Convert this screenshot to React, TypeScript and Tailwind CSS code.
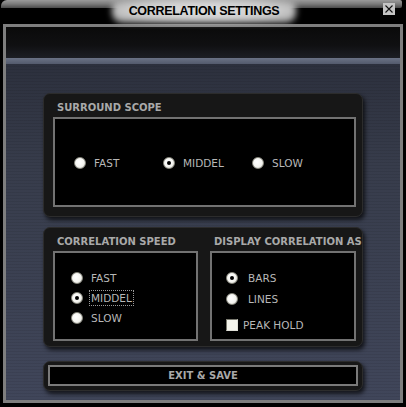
import React from 'react';

const Radio = ({ checked }: { checked?: boolean }) => (
    <span className="relative flex items-center justify-center w-[12px] h-[12px] rounded-full border border-[#8a8a80] bg-[radial-gradient(circle_at_40%_40%,#ffffff_0%,#f4f4f0_55%,#c8c8c0_100%)] shrink-0">
        {checked && <span className="w-[4px] h-[4px] rounded-full bg-black" />}
    </span>
);

const Option = ({ label, checked, focused }: { label: string; checked?: boolean; focused?: boolean }) => (
    <div className="flex items-center h-[12px] gap-[7px]">
        <Radio checked={checked} />
        <span className={`px-[1px] leading-[14px] text-[10.5px] text-[#b8b8b8] ${focused ? 'outline outline-1 outline-dotted outline-[#9a9a9a]' : ''}`}>
            {label}
        </span>
    </div>
);

// Dark leather panel with rounded corners and a drop shadow
const Panel = ({ children, className = '' }: { children: React.ReactNode; className?: string }) => (
    <div className={`rounded-[7px] bg-[#171717] border border-[#2c2c2c] shadow-[2px_3px_4px_rgba(0,0,0,0.7)] ${className}`}>
        {children}
    </div>
);

const Label = ({ children }: { children: React.ReactNode }) => (
    <div className="whitespace-nowrap text-[10px] font-bold leading-[12px] tracking-[0px] text-[#a9a9a9]">{children}</div>
);

export default function App() {
    return (
        <div className="relative w-[406px] h-[407px] bg-black overflow-hidden font-['DejaVu_Sans',sans-serif]">
            {/* Title strip */}
            <div className="relative h-[24px]">
                <div className="ml-[1px] mr-[4px] h-[8px] rounded-tl-[6px] rounded-r-[2px] bg-[linear-gradient(180deg,#9a9a9a_0%,#7a7a7a_50%,#4a4a4a_100%)]" />
                <div className="absolute left-[112px] top-[-2px] w-[184px] h-[25px] rounded-[10px] bg-[radial-gradient(ellipse_at_center,#e0e0e0_0%,#cccccc_60%,#8a8a8a_100%)] blur-[3px]" />
                <div className="absolute left-[114px] top-[1px] w-[180px] h-[21px] flex items-center justify-center">
                    <span className="font-['Liberation_Sans',sans-serif] text-[12.5px] font-bold tracking-[-0.3px] text-black">
                        CORRELATION SETTINGS
                    </span>
                </div>
                <div className="absolute left-[383px] top-[3px] w-[12px] h-[12px] bg-[#c4c4c4] flex items-center justify-center">
                    <svg width="10" height="10" viewBox="0 0 10 10">
                        <path d="M1.5 1.5 L8.5 8.5 M8.5 1.5 L1.5 8.5" stroke="#111" strokeWidth="1.1" />
                    </svg>
                </div>
            </div>

            {/* Main frame */}
            <div className="ml-[3px] w-[400px] h-[379px] border-[3px] border-[#7e7e7e] flex flex-col">
                <div className="h-[31px] bg-[linear-gradient(180deg,#0a0a0a_0%,#101012_60%,#1c1e24_100%)]" />
                <div className="h-[6px] bg-[linear-gradient(180deg,#6a7285_0%,#535a6c_100%)]" />
                <div className="flex-1 flex flex-col items-start pl-[37px] pt-[29px] bg-[repeating-linear-gradient(0deg,rgba(0,0,0,0.07)_0px,rgba(0,0,0,0.07)_1px,transparent_1px,transparent_3px),linear-gradient(180deg,#2c303d_0%,#373c4b_30%,#40465a_100%)]">
                    {/* Surround scope */}
                    <Panel className="w-[320px] h-[124px] pl-[9px] pr-[6px] pt-[8px]">
                        <div className="pl-[4px]">
                            <Label>SURROUND SCOPE</Label>
                        </div>
                        <div className="mt-[3px] h-[90px] border-2 border-[#727272] bg-black flex items-center pl-[19px] pt-[2px]">
                            <div className="w-[89px]"><Option label="FAST" /></div>
                            <div className="w-[89px]"><Option label="MIDDEL" checked /></div>
                            <Option label="SLOW" />
                        </div>
                    </Panel>

                    {/* Correlation speed / display */}
                    <Panel className="mt-[10px] w-[320px] h-[120px] pl-[9px] pr-[6px] pt-[8px]">
                        <div className="flex gap-[12px]">
                            <div className="w-[145px]">
                                <div className="pl-[4px]"><Label>CORRELATION SPEED</Label></div>
                                <div className="mt-[3px] h-[90px] border-2 border-[#727272] bg-black flex flex-col gap-[8px] pl-[16px] pt-[19px]">
                                    <Option label="FAST" />
                                    <Option label="MIDDEL" checked focused />
                                    <Option label="SLOW" />
                                </div>
                            </div>
                            <div className="w-[146px]">
                                <div className="pl-[4px]"><Label>DISPLAY CORRELATION AS</Label></div>
                                <div className="mt-[3px] h-[90px] border-2 border-[#727272] bg-black flex flex-col pl-[14px] pt-[19px]">
                                    <div className="[&>div]:gap-[9px]"><Option label="BARS" checked /></div>
                                    <div className="mt-[9px] [&>div]:gap-[9px]"><Option label="LINES" /></div>
                                    <div className="mt-[14px] flex items-center h-[12px] gap-[5px]">
                                        <span className="w-[12px] h-[12px] bg-[#f4f4ec] border border-t-[#7a7a70] border-l-[#7a7a70] border-r-[#e0e0d8] border-b-[#e0e0d8]" />
                                        <span className="text-[10.5px] leading-[14px] text-[#b8b8b8]">PEAK HOLD</span>
                                    </div>
                                </div>
                            </div>
                        </div>
                    </Panel>

                    {/* Exit button */}
                    <Panel className="mt-[14px] w-[320px] h-[30px] pl-[4px] pr-[4px] pt-[3px]">
                        <div className="h-[21px] border-2 border-[#7a7a7a] bg-black flex items-center justify-center">
                            <span className="text-[10px] font-bold text-[#a9a9a9]">EXIT &amp; SAVE</span>
                        </div>
                    </Panel>
                </div>
            </div>
        </div>
    );
}
